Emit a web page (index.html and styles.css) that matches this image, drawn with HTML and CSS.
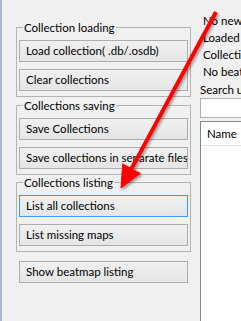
FILE: index.html
```html
<!DOCTYPE html>
<html>
<head>
<meta charset="utf-8">
<link rel="stylesheet" href="styles.css">
</head>
<body>
<div class="window">
  <div class="left">
    <fieldset class="group">
      <legend>Collection loading</legend>
      <div class="group-body">
        <button class="btn">Load collection( .db/.osdb)</button>
        <button class="btn">Clear collections</button>
      </div>
    </fieldset>
    <fieldset class="group group-tight">
      <legend>Collections saving</legend>
      <div class="group-body">
        <button class="btn">Save Collections</button>
        <button class="btn">Save collections in separate files</button>
      </div>
    </fieldset>
    <fieldset class="group">
      <legend>Collections listing</legend>
      <div class="group-body">
        <button class="btn focused">List all collections</button>
        <button class="btn">List missing maps</button>
      </div>
    </fieldset>
    <button class="btn standalone">Show beatmap listing</button>
  </div>
  <div class="right">
    <div class="labels">
      <div class="label">No new</div>
      <div class="label">Loaded</div>
      <div class="label">Collectio</div>
      <div class="label">No beat</div>
    </div>
    <div class="search-label">Search u</div>
    <div class="input"></div>
    <div class="listview">
      <div class="lv-header"><span class="lv-col">Name</span></div>
    </div>
  </div>
  <svg class="arrow" width="241" height="321" viewBox="0 0 241 321">
    <defs>
      <filter id="sh" x="-20%" y="-20%" width="140%" height="140%">
        <feDropShadow dx="1.5" dy="2" stdDeviation="1.2" flood-color="#000" flood-opacity="0.35"/>
      </filter>
    </defs>
    <g filter="url(#sh)" fill="#ff0000" stroke="#ff0000">
      <line x1="216" y1="12" x2="131.5" y2="168.6" stroke-width="4"/>
      <polygon points="121,188 140.3,173.4 122.7,163.9" stroke-width="1" stroke-linejoin="round"/>
    </g>
  </svg>
</div>
</body>
</html>
```

FILE: styles.css
```css
html, body {
  margin: 0;
  padding: 0;
  background: #f0f0f0;
}

.window {
  position: relative;
  width: 241px;
  height: 321px;
  box-sizing: border-box;
  border-left: 2px solid #9cb9dd;
  background: #f0f0f0;
  display: flex;
  overflow: hidden;
  font-family: Lato, "Noto Sans", sans-serif;
  font-size: 11.5px;
  color: #000;
}

.left {
  margin-left: 14px;
  width: 175px;
  flex: none;
  padding-top: 20px;
  display: flex;
  flex-direction: column;
}

.group {
  margin: 0 0 1px 0;
  padding: 5px 2px 5px 2px;
  border: 1px solid #b4b4b4;
  border-radius: 0;
  min-width: 0;
}

.group-tight {
  margin-bottom: 0;
}

.group legend {
  padding: 0 1px;
  margin-left: 4px;
  height: 15px;
  line-height: 15px;
}

.group-body {
  display: flex;
  flex-direction: column;
  gap: 7px;
}

.btn {
  display: block;
  box-sizing: border-box;
  width: 169px;
  height: 22px;
  margin: 0;
  padding: 0 0 1px 6px;
  text-align: left;
  font-family: inherit;
  font-size: inherit;
  color: #000;
  border: 1px solid #adadad;
  border-radius: 0;
  background: linear-gradient(#f0f0f0, #e5e5e5);
  white-space: nowrap;
  overflow: hidden;
}

.btn.focused {
  border-color: #3c9af0;
}

.btn.standalone {
  margin: 8px 0 0 3px;
}

.right {
  margin-left: 9px;
  flex: 1;
  min-width: 0;
  overflow: hidden;
}

.labels {
  padding-top: 12px;
  margin-left: 3px;
}

.label,
.search-label {
  height: 17px;
  line-height: 17px;
  white-space: nowrap;
}

.search-label {
  margin-top: 1px;
}

.input {
  width: 300px;
  height: 20px;
  box-sizing: border-box;
  border: 1px solid #abadb3;
  background: #fff;
}

.listview {
  margin-top: 3px;
  width: 300px;
  height: 220px;
  box-sizing: border-box;
  border: 1px solid #828790;
  background: #fff;
}

.lv-header {
  height: 23px;
  line-height: 23px;
  border-bottom: 1px solid #e5e5e5;
  white-space: nowrap;
}

.lv-col {
  padding-left: 6px;
}

.arrow {
  position: absolute;
  left: -2px;
  top: 0;
  pointer-events: none;
}
```
